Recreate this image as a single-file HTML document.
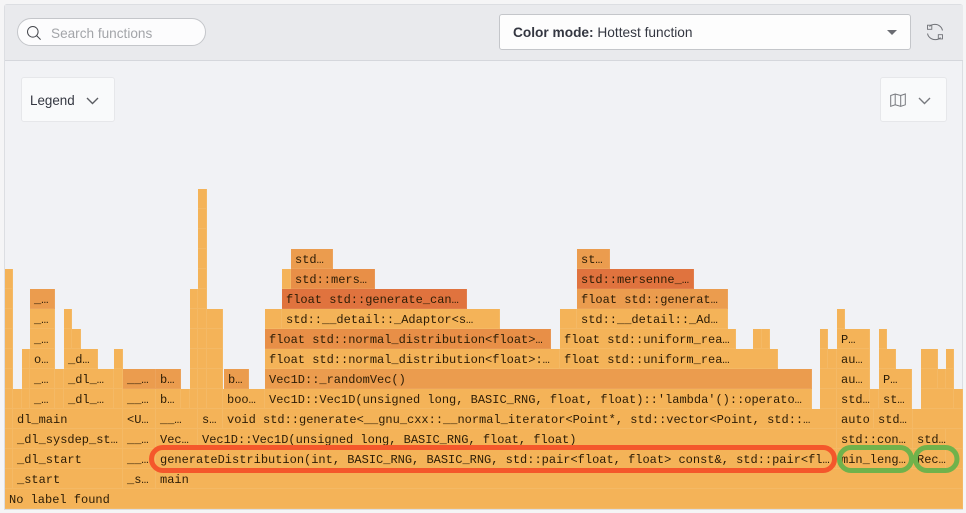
<!DOCTYPE html>
<html><head><meta charset="utf-8"><style>
html,body{margin:0;padding:0;width:966px;height:513px;overflow:hidden;background:#f5f5f6;font-family:"Liberation Sans",sans-serif}
#panel{position:absolute;left:4px;top:4px;width:959px;height:506px;background:#f1f2f5;border:1px solid #dcdee2;border-radius:3px 3px 0 0;box-sizing:border-box}
#head{position:absolute;left:5px;top:5px;width:958px;height:56px;background:#e9eaed;border-bottom:1px solid #d5d7dc;box-sizing:border-box}
.ab{position:absolute;box-sizing:border-box}
#search{left:17px;top:18px;width:189px;height:28px;background:#fcfcfd;border:1px solid #c4c6ca;border-radius:14px;color:#a3a5a9;font-size:13.6px;line-height:29px;padding-left:33px}
#sel{left:499px;top:14px;width:412px;height:36px;background:#fdfdfd;border:1px solid #c4c6ca;border-radius:3px;color:#343741;font-size:13.7px;line-height:35px;padding-left:13px}
#caret{left:887px;top:30px;width:0;height:0;border-left:5px solid transparent;border-right:5px solid transparent;border-top:5px solid #6a6c72}
.btn{top:77px;height:45px;background:#f9fafb;border:1px solid #e6e7ea;border-radius:3px}
#leg{left:21px;width:94px;color:#343741;font-size:13.4px;line-height:45px;padding-left:8px}
#map{left:880px;width:67px}
#fg div{position:absolute;height:20px;box-sizing:border-box;background:#f4b358;box-shadow:inset -1px -1px 0 rgba(255,255,255,.08);font:12px/20px "Liberation Mono",monospace;color:#2b1c06;padding:1px 0 0 4px;white-space:pre;overflow:hidden}
#fg .m{background:#eb9c4e}
#fg .h{background:#e88f47}
#fg .d{background:#e0733e}
.k0{top:489px}.k1{top:469px}.k2{top:449px}.k3{top:429px}.k4{top:409px}.k5{top:389px}.k6{top:369px}.k7{top:349px}.k8{top:329px}.k9{top:309px}.k10{top:289px}.k11{top:269px}.k12{top:249px}.k13{top:229px}.k14{top:209px}.k15{top:189px}
svg.ab{overflow:visible}
</style></head><body>
<div id="panel"></div>
<div id="head" class="ab"></div>
<div id="search" class="ab">Search functions</div>
<svg class="ab" style="left:26px;top:25px" width="16" height="16" viewBox="0 0 16 16" fill="none" stroke="#44464c" stroke-width="1"><circle cx="6.8" cy="6.8" r="5.3"/><path d="M10.6 10.6L14.6 14.6"/></svg>
<div id="sel" class="ab"><b style="font-weight:700">Color mode:</b> Hottest function</div>
<div id="caret" class="ab"></div>
<svg class="ab" style="left:926px;top:23px" width="18" height="18" viewBox="0 0 18 18" fill="none" stroke="#6f7176" stroke-width="1"><path d="M3.5 3.5C6 .9 11 .6 14 3.2C15.6 4.6 16.3 6.2 16.4 7.5"/><path d="M14.6 14.6C12 17.2 7 17.4 4 14.8C2.4 13.4 1.7 11.800 1.600 10.500"/><path d="M1.500 2.200H5.800V6.300H1.500Z" stroke-width=".9"/><path d="M12.300 11.700H16.500V15.900H12.300Z" stroke-width=".9"/></svg>
<div id="leg" class="ab btn">Legend</div>
<svg class="ab" style="left:86px;top:97px" width="13" height="8" viewBox="0 0 13 8" fill="none" stroke="#5b5d62" stroke-width="1.4"><path d="M1 1L6.500 6.500L12 1"/></svg>
<div id="map" class="ab btn"></div>
<svg class="ab" style="left:890px;top:93px" width="16" height="14" viewBox="0 0 16 14" fill="none" stroke="#77797e" stroke-width="1"><path d="M.7 2.500L5.200 1L10.700 2.500L15.300 1V11.800L10.700 13.300L5.200 11.800L.7 13.300Z"/><path d="M5.200 1V11.800M10.700 2.500V13.300"/></svg>
<svg class="ab" style="left:918px;top:97px" width="13" height="8" viewBox="0 0 13 8" fill="none" stroke="#77797e" stroke-width="1.400"><path d="M1 1L6.500 6.500L12 1"/></svg>

<div id="fg">
<div class="k0" style="left:5px;width:958px">No label found</div>

<div class="k1" style="left:5px;width:8px"></div>
<div class="k1" style="left:13px;width:110px">_start</div>
<div class="k1" style="left:123px;width:33px">_s…</div>
<div class="k1" style="left:156px;width:807px">main</div>

<div class="k2" style="left:5px;width:8px"></div>
<div class="k2" style="left:13px;width:110px">_dl_start</div>
<div class="k2" style="left:123px;width:33px">__…</div>
<div class="k2" style="left:156px;width:681px">generateDistribution(int, BASIC_RNG, BASIC_RNG, std::pair&lt;float, float&gt; const&amp;, std::pair&lt;fl…</div>
<div class="k2" style="left:837px;width:76px">min_leng…</div>
<div class="k2" style="left:913px;width:33px">Rec…</div>
<div class="k2" style="left:946px;width:17px"></div>

<div class="k3" style="left:5px;width:8px"></div>
<div class="k3" style="left:13px;width:110px">_dl_sysdep_st…</div>
<div class="k3" style="left:123px;width:33px">__…</div>
<div class="k3" style="left:156px;width:42px">Vec…</div>
<div class="k3" style="left:198px;width:639px">Vec1D::Vec1D(unsigned long, BASIC_RNG, float, float)</div>
<div class="k3" style="left:837px;width:76px">std::con…</div>
<div class="k3" style="left:913px;width:33px">std…</div>
<div class="k3" style="left:946px;width:17px"></div>

<div class="k4" style="left:5px;width:8px"></div>
<div class="k4" style="left:13px;width:110px">dl_main</div>
<div class="k4" style="left:123px;width:33px">&lt;U…</div>
<div class="k4" style="left:156px;width:42px">__…</div>
<div class="k4" style="left:198px;width:25px">s…</div>
<div class="k4" style="left:223px;width:614px">void std::generate&lt;__gnu_cxx::__normal_iterator&lt;Point*, std::vector&lt;Point, std::…</div>
<div class="k4" style="left:837px;width:37px">auto</div>
<div class="k4" style="left:874px;width:39px">std…</div>
<div class="k4" style="left:913px;width:50px"></div>

<div class="k5" style="left:5px;width:8px"></div>
<div class="k5" style="left:13px;width:9px"></div>
<div class="k5" style="left:22px;width:8px"></div>
<div class="k5" style="left:30px;width:25px">_…</div>
<div class="k5" style="left:55px;width:9px"></div>
<div class="k5" style="left:64px;width:50px">_dl_…</div>
<div class="k5" style="left:114px;width:9px"></div>
<div class="k5" style="left:123px;width:33px">__…</div>
<div class="k5" style="left:156px;width:25px">b…</div>
<div class="k5" style="left:181px;width:9px"></div>
<div class="k5" style="left:190px;width:8px"></div>
<div class="k5" style="left:198px;width:9px"></div>
<div class="k5" style="left:207px;width:16px"></div>
<div class="k5" style="left:223px;width:42px">boo…</div>
<div class="k5" style="left:265px;width:547px">Vec1D::Vec1D(unsigned long, BASIC_RNG, float, float)::'lambda'()::operato…</div>
<div class="k5" style="left:820px;width:17px"></div>
<div class="k5" style="left:837px;width:33px">std…</div>
<div class="k5" style="left:870px;width:9px"></div>
<div class="k5" style="left:879px;width:33px">st…</div>
<div class="k5" style="left:921px;width:33px"></div>
<div class="k5" style="left:954px;width:9px"></div>

<div class="k6" style="left:5px;width:8px"></div>
<div class="k6" style="left:22px;width:8px"></div>
<div class="k6" style="left:30px;width:25px">_…</div>
<div class="k6" style="left:55px;width:9px"></div>
<div class="k6" style="left:64px;width:50px">_dl_…</div>
<div class="k6" style="left:114px;width:9px"></div>
<div class="k6 m" style="left:123px;width:33px">__…</div>
<div class="k6 m" style="left:156px;width:25px">b…</div>
<div class="k6" style="left:190px;width:8px"></div>
<div class="k6" style="left:198px;width:9px"></div>
<div class="k6" style="left:207px;width:16px"></div>
<div class="k6 m" style="left:224px;width:25px">b…</div>
<div class="k6 m" style="left:265px;width:547px">Vec1D::_randomVec()</div>
<div class="k6" style="left:820px;width:17px"></div>
<div class="k6" style="left:837px;width:33px">au…</div>
<div class="k6" style="left:879px;width:33px">P…</div>
<div class="k6" style="left:921px;width:17px"></div>
<div class="k6" style="left:938px;width:8px"></div>
<div class="k6" style="left:946px;width:8px"></div>

<div class="k7" style="left:5px;width:8px"></div>
<div class="k7" style="left:22px;width:8px"></div>
<div class="k7" style="left:30px;width:25px">o…</div>
<div class="k7" style="left:64px;width:34px">_d…</div>
<div class="k7" style="left:114px;width:9px"></div>
<div class="k7" style="left:190px;width:8px"></div>
<div class="k7" style="left:198px;width:9px"></div>
<div class="k7" style="left:207px;width:16px"></div>
<div class="k7" style="left:265px;width:295px">float std::normal_distribution&lt;float&gt;:…</div>
<div class="k7" style="left:560px;width:218px">float std::uniform_rea…</div>
<div class="k7" style="left:820px;width:8px"></div>
<div class="k7" style="left:828px;width:9px"></div>
<div class="k7" style="left:837px;width:33px">au…</div>
<div class="k7" style="left:879px;width:17px"></div>
<div class="k7" style="left:921px;width:17px"></div>
<div class="k7" style="left:946px;width:8px"></div>

<div class="k8" style="left:5px;width:8px"></div>
<div class="k8" style="left:30px;width:25px">_…</div>
<div class="k8" style="left:64px;width:8px"></div>
<div class="k8" style="left:72px;width:9px"></div>
<div class="k8" style="left:190px;width:8px"></div>
<div class="k8" style="left:198px;width:9px"></div>
<div class="k8" style="left:207px;width:16px"></div>
<div class="k8 h" style="left:265px;width:286px">float std::normal_distribution&lt;float&gt;…</div>
<div class="k8" style="left:560px;width:176px">float std::uniform_rea…</div>
<div class="k8" style="left:753px;width:9px"></div>
<div class="k8" style="left:762px;width:8px"></div>
<div class="k8" style="left:820px;width:8px"></div>
<div class="k8" style="left:837px;width:33px">P…</div>
<div class="k8" style="left:879px;width:8px"></div>

<div class="k9" style="left:5px;width:8px"></div>
<div class="k9" style="left:30px;width:25px">_…</div>
<div class="k9" style="left:64px;width:8px"></div>
<div class="k9" style="left:190px;width:8px"></div>
<div class="k9" style="left:198px;width:9px"></div>
<div class="k9" style="left:207px;width:16px"></div>
<div class="k9" style="left:265px;width:17px"></div>
<div class="k9" style="left:282px;width:218px">std::__detail::_Adaptor&lt;s…</div>
<div class="k9" style="left:560px;width:17px"></div>
<div class="k9" style="left:577px;width:151px">std::__detail::_Ad…</div>
<div class="k9" style="left:837px;width:8px"></div>

<div class="k10" style="left:5px;width:8px"></div>
<div class="k10 m" style="left:30px;width:25px">_…</div>
<div class="k10" style="left:190px;width:8px"></div>
<div class="k10" style="left:198px;width:9px"></div>
<div class="k10 d" style="left:282px;width:185px">float std::generate_can…</div>
<div class="k10 m" style="left:577px;width:151px">float std::generat…</div>

<div class="k11" style="left:5px;width:8px"></div>
<div class="k11" style="left:198px;width:9px"></div>
<div class="k11" style="left:282px;width:9px"></div>
<div class="k11 h" style="left:291px;width:84px">std::mers…</div>
<div class="k11 d" style="left:577px;width:117px">std::mersenne_…</div>

<div class="k12" style="left:198px;width:9px"></div>
<div class="k12 m" style="left:291px;width:42px">std…</div>
<div class="k12 m" style="left:577px;width:33px">st…</div>

<div class="k13" style="left:198px;width:9px"></div>
<div class="k14" style="left:198px;width:9px"></div>
<div class="k15" style="left:198px;width:9px"></div>
</div>

<svg class="ab" style="left:0;top:0" width="966" height="513" fill="none" stroke-width="5">
<rect x="151.500" y="447.500" width="683" height="23" rx="11.500" stroke="#f4572b"/>
<rect x="839.500" y="447.500" width="72" height="23" rx="11.500" stroke="#70b24b"/>
<rect x="915.500" y="447.500" width="41.500" height="23" rx="11.500" stroke="#70b24b"/>
</svg>
</body></html>
